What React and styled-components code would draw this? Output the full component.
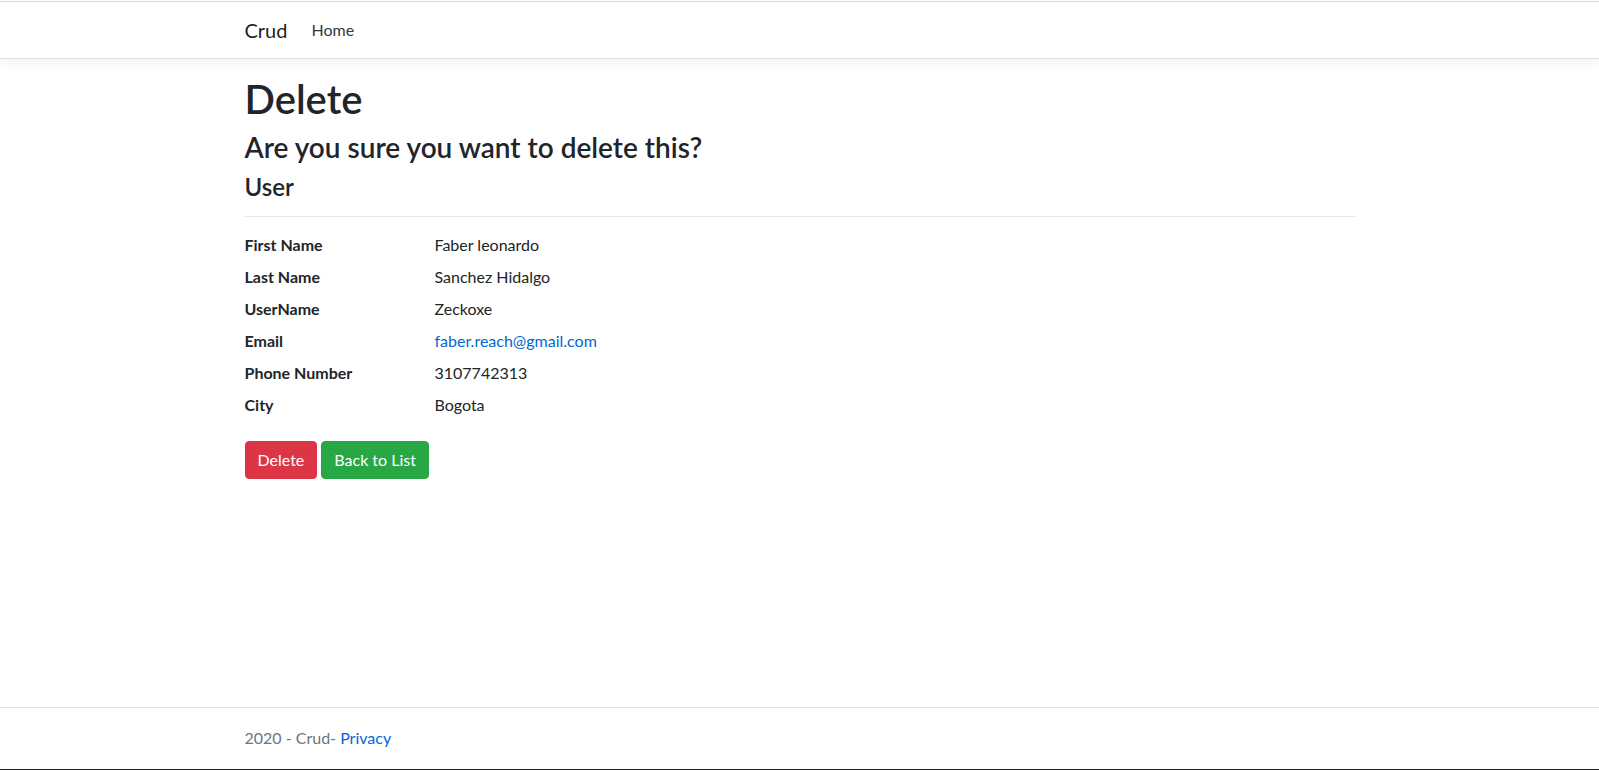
import React from "react";
import styled, { createGlobalStyle } from "styled-components";

const Global = createGlobalStyle`
  html, body { margin: 0; padding: 0; }
  body {
    font-family: Lato, "Open Sans", "Noto Sans", Arial, sans-serif;
    font-size: 16px;
    line-height: 1.5;
    color: #212529;
    background: #fff;
  }
  * { box-sizing: border-box; }
`;

const Page = styled.div`
  min-height: 770px;
  height: 770px;
  display: flex;
  flex-direction: column;
  overflow: hidden;
`;

const TopEdge = styled.div`
  height: 2px;
  border-bottom: 1px solid #d8d8d8;
  background: #fff;
  flex: none;
`;

const BottomEdge = styled.div`
  height: 2px;
  border-bottom: 1px solid #1e1e1e;
  flex: none;
`;

const Container = styled.div`
  width: 100%;
  max-width: 1140px;
  padding: 0 15px;
  margin: 0 auto;
`;

const Header = styled.header`
  flex: none;
  background: #fff;
  border-bottom: 1px solid #dee2e6;
  box-shadow: 0 0.25rem 0.75rem rgba(0, 0, 0, 0.05);
  margin-bottom: 16px;
  position: relative;
  z-index: 1;
`;

const NavInner = styled(Container)`
  display: flex;
  align-items: center;
  padding-top: 8px;
  padding-bottom: 8px;
`;

const Brand = styled.a`
  font-size: 20px;
  line-height: 30px;
  padding: 5px 0;
  margin-right: 16px;
  color: rgba(0, 0, 0, 0.9);
  text-decoration: none;
`;

const NavLink = styled.a`
  padding: 8px;
  color: #343a40;
  text-decoration: none;
  font-size: 16px;
  line-height: 24px;
`;

const Main = styled.main`
  flex: 1;
  padding-bottom: 16px;
`;

const H1 = styled.h1`
  font-size: 40px;
  font-weight: 600;
  line-height: 1.2;
  margin: 0 0 8px;
`;

const H3 = styled.h3`
  font-size: 28px;
  font-weight: 600;
  line-height: 1.2;
  margin: 0 0 8px;
`;

const H4 = styled.h4`
  font-size: 24px;
  font-weight: 600;
  line-height: 1.2;
  margin: 0 0 8px;
`;

const Rule = styled.hr`
  margin: 15px 0 16px;
  border: 0;
  border-top: 1px solid rgba(0, 0, 0, 0.1);
`;

const DetailList = styled.dl`
  display: grid;
  grid-template-columns: 190px 1fr;
  margin: 0 0 16px;
`;

const Term = styled.dt`
  font-weight: 700;
  margin-bottom: 8px;
`;

const Value = styled.dd`
  margin: 0 0 8px;
`;

const Link = styled.a`
  color: #0366d6;
  text-decoration: none;
`;

const Actions = styled.form`
  display: flex;
  gap: 4px;
  margin: 0;
`;

const Button = styled.button`
  font-family: inherit;
  font-size: 16px;
  line-height: 24px;
  padding: 6px 12px;
  border-radius: 4px;
  border: 1px solid ${(p) => p.$bg};
  background: ${(p) => p.$bg};
  color: #fff;
  cursor: pointer;
`;

const Footer = styled.footer`
  flex: none;
  border-top: 1px solid #dee2e6;
  line-height: 60px;
  white-space: nowrap;
  color: #6c757d;
  font-size: 16px;
`;

const rows = [
  ["First Name", "Faber leonardo"],
  ["Last Name", "Sanchez Hidalgo"],
  ["UserName", "Zeckoxe"],
  ["Email", "faber.reach@gmail.com", true],
  ["Phone Number", "3107742313"],
  ["City", "Bogota"],
];

export default function App() {
  return (
    <>
      <Global />
      <Page>
        <TopEdge />
        <Header>
          <NavInner>
            <Brand href="#">Crud</Brand>
            <NavLink href="#">Home</NavLink>
          </NavInner>
        </Header>
        <Main>
          <Container>
            <H1>Delete</H1>
            <H3>Are you sure you want to delete this?</H3>
            <div>
              <H4>User</H4>
              <Rule />
              <DetailList>
                {rows.map(([k, v, link]) => (
                  <React.Fragment key={k}>
                    <Term>{k}</Term>
                    <Value>{link ? <Link href="#">{v}</Link> : v}</Value>
                  </React.Fragment>
                ))}
              </DetailList>
              <Actions onSubmit={(e) => e.preventDefault()}>
                <Button type="submit" $bg="#dc3545">Delete</Button>
                <Button type="button" $bg="#28a745">Back to List</Button>
              </Actions>
            </div>
          </Container>
        </Main>
        <Footer>
          <Container>
            2020 - Crud- <Link href="#">Privacy</Link>
          </Container>
        </Footer>
        <BottomEdge />
      </Page>
    </>
  );
}
